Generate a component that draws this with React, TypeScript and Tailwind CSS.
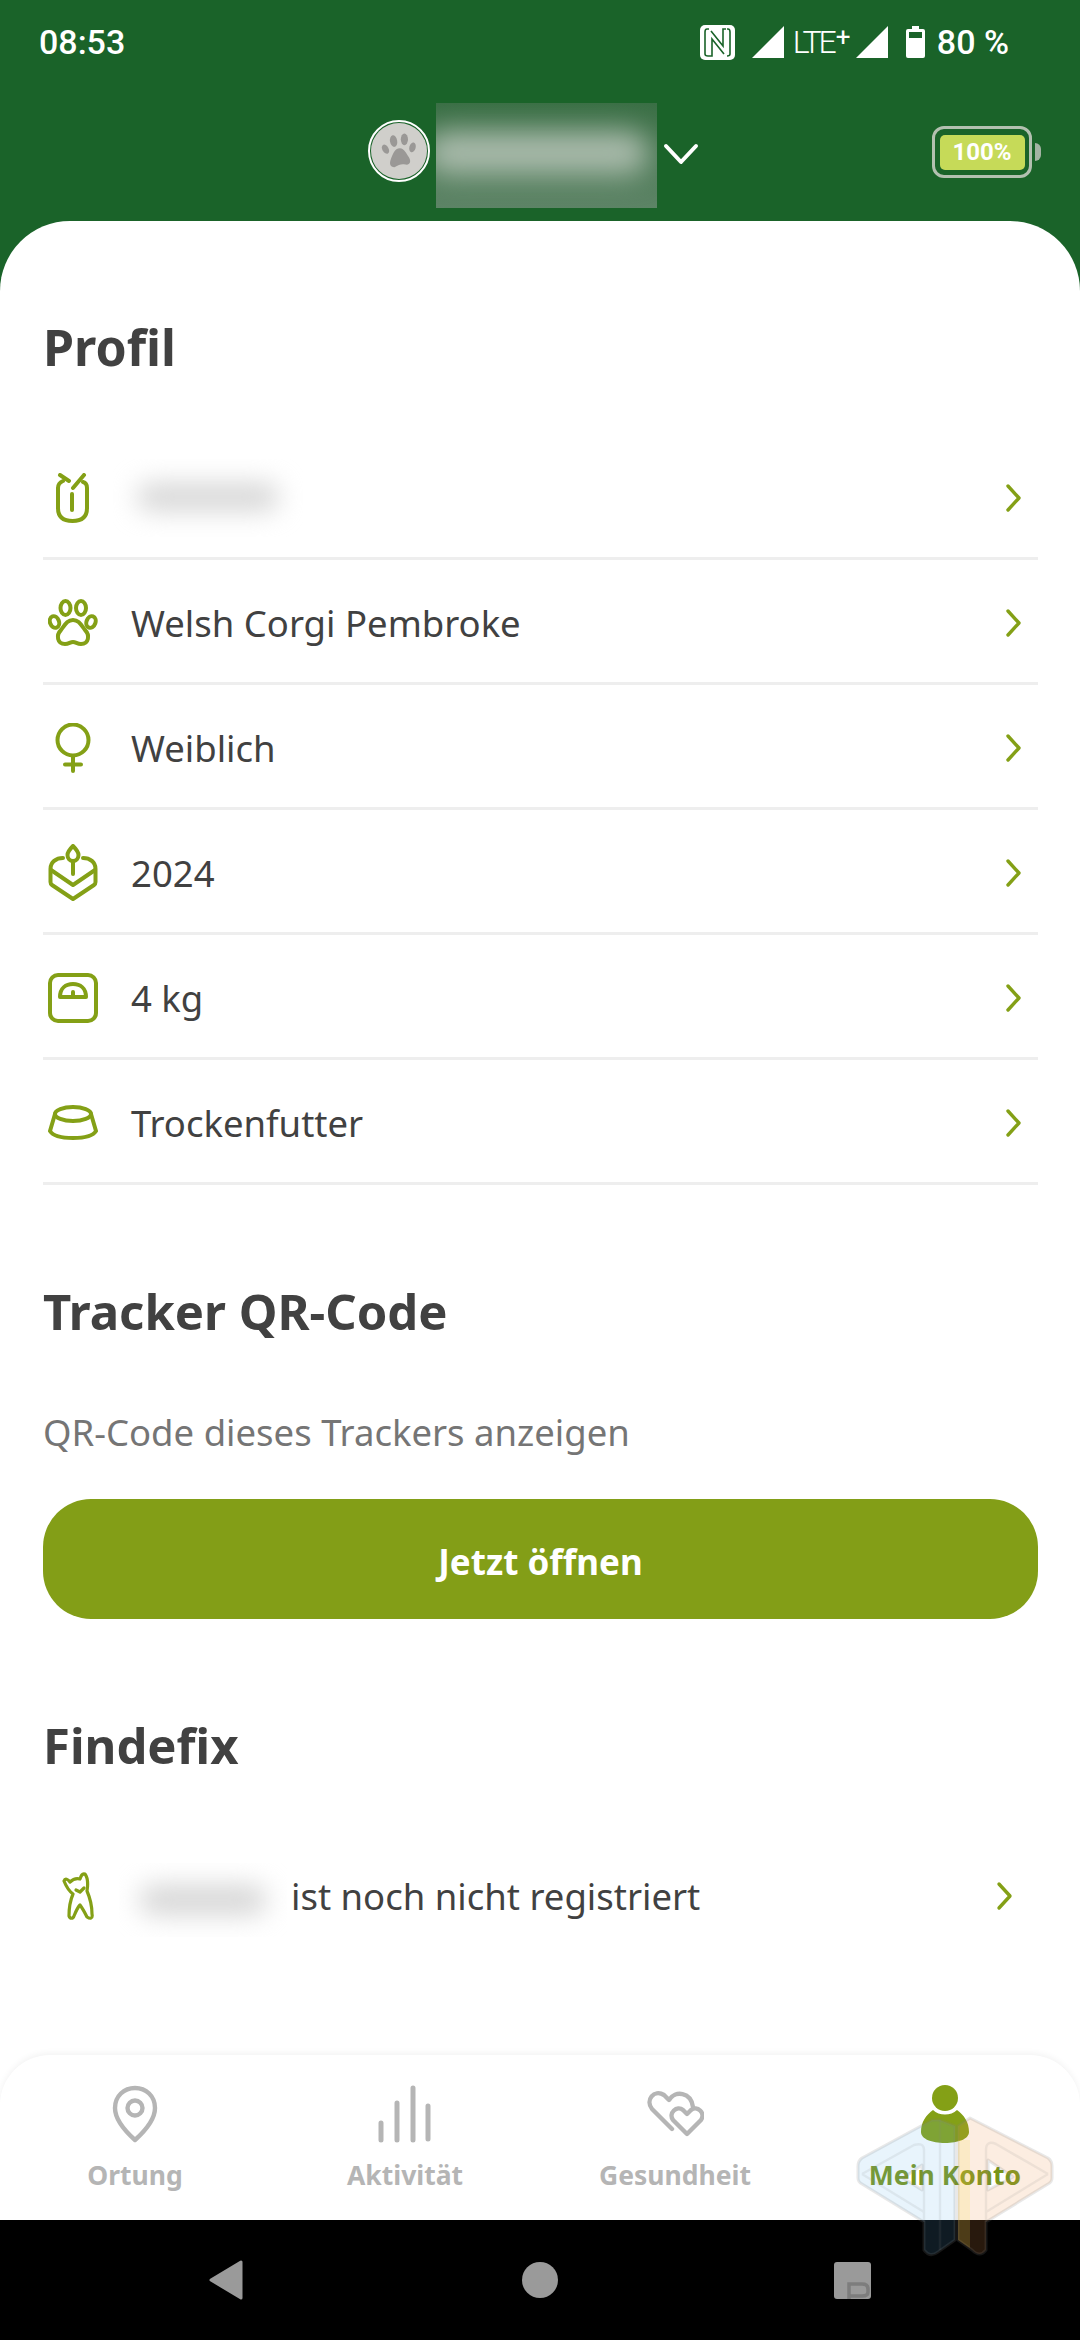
import React from 'react';

const GREEN = '#84a016';

const Chevron = ({ className = '' }: { className?: string }) => (
  <svg viewBox="0 0 20 30" className={`w-[20px] h-[30px] ${className}`} fill="none" stroke={GREEN} strokeWidth="3.4" strokeLinecap="round" strokeLinejoin="round">
    <path d="M4 3 L15 15 L4 27" />
  </svg>
);

const RowIcon = ({ children }: { children: React.ReactNode }) => (
  <svg viewBox="0 0 50 50" className="w-[50px] h-[50px] shrink-0" fill="none" stroke={GREEN} strokeWidth="4" strokeLinecap="round" strokeLinejoin="round">
    {children}
  </svg>
);

const TrackerIcon = () => (
  <RowIcon>
    <path d="M12 2 L21 8 M36 2 L25 15" />
    <path d="M15 8 Q10 10 10 15 V35 Q10 48 24.5 48 Q39 48 39 35 V15 Q39 10 35 9" />
    <path d="M24 21 V37" />
  </RowIcon>
);

const PawIcon = () => (
  <RowIcon>
    <ellipse cx="17.5" cy="10" rx="5" ry="7" />
    <ellipse cx="33" cy="10" rx="5" ry="7" />
    <ellipse cx="6.5" cy="24" rx="4.5" ry="6" transform="rotate(-20 6.5 24)" />
    <ellipse cx="43" cy="24" rx="4.5" ry="6" transform="rotate(20 43 24)" />
    <path d="M25 22 C31 22 33 27 37 32 C42 37 41 46 33 46 C29 46 28 44 25 44 C22 44 21 46 17 46 C9 46 8 37 13 32 C17 27 19 22 25 22 Z" />
  </RowIcon>
);

const FemaleIcon = () => (
  <RowIcon>
    <circle cx="25" cy="17" r="15.5" />
    <path d="M25 33 V48 M17 41.5 H33" />
  </RowIcon>
);

const CakeIcon = () => (
  <svg viewBox="0 0 50 58" className="w-[50px] h-[58px] shrink-0" fill="none" stroke={GREEN} strokeWidth="4" strokeLinecap="round" strokeLinejoin="round">
    <path d="M25 2 C22 5 19.5 8 19.5 11 C19.5 14.5 22 17 25 17 C28 17 30.5 14.5 30.5 11 C30.5 8 28 5 25 2 Z" />
    <path d="M25 17 V30" />
    <path d="M15 14 C8 14 2.5 18 2.5 25 V38 Q2.5 40 4 41 L25 55 L46 41 Q47.5 40 47.5 38 V25 C47.5 18 42 14 35 14" />
    <path d="M3 26 L25 41 L47 26" />
  </svg>
);

const ScaleIcon = () => (
  <RowIcon>
    <rect x="2" y="2" width="46" height="46" rx="8" />
    <path d="M12 24 C12 15 18 11 25 11 C32 11 38 15 38 24 Z" />
    <path d="M25 19 V22" strokeWidth="4" />
  </RowIcon>
);

const BowlIcon = () => (
  <svg viewBox="0 0 50 36" className="w-[50px] h-[36px] shrink-0" fill="none" stroke={GREEN} strokeWidth="4" strokeLinecap="round" strokeLinejoin="round">
    <ellipse cx="25" cy="9" rx="18" ry="7" />
    <path d="M7 9 L2 26 C5 31 15 33 25 33 C35 33 45 31 48 26 L43 9" />
  </svg>
);

const DogIcon = () => (
  <svg viewBox="0 0 32 48" className="w-[32px] h-[48px] shrink-0" fill="none" stroke={GREEN} strokeWidth="3.2" strokeLinecap="round" strokeLinejoin="round">
    <path d="M2 9 C4 14 7 19 11 22 C8 29 7 36 7 44 C8 47 11 47 12 44 C14 39 16 35 18 33 C21 37 23 41 25 45 C28 47 31 47 30 42 C30 34 28 26 25 19 C26 13 26 6 23 2 C20 1 19 4 18 7 C14 6 10 8 8 10 C6 7 3 6 2 9 Z" />
    <path d="M14 18 L18 20 L22 16" />
  </svg>
);

const ProfileRow = ({ icon, children }: { icon: React.ReactNode; children: React.ReactNode }) => (
  <div className="h-[125px] pt-[4px] flex items-center border-b-[3px] border-[#eeeeee]">
    <div className="w-[88px] pl-[5px] flex items-center shrink-0">{icon}</div>
    <div className="flex-1 text-[36.5px] text-[#414141]">{children}</div>
    <Chevron className="mr-[14px]" />
  </div>
);

const NavItem = ({ icon, label, active = false }: { icon: React.ReactNode; label: string; active?: boolean }) => (
  <div className="flex flex-col items-center">
    <div className="h-[60px] flex items-center justify-center">{icon}</div>
    <div className={`mt-[12px] text-[26.5px] leading-[38px] font-bold ${active ? 'text-[#78951a]' : 'text-[#b5b5b5]'}`}>{label}</div>
  </div>
);

export default function App() {
  return (
    <div className="relative w-[1080px] h-[2340px] flex flex-col overflow-hidden bg-white font-['Noto_Sans',sans-serif]">
      <div className="shrink-0 bg-[#1a6329] pb-[70px]">
        {/* Status bar */}
        <div className="h-[84px] pl-[39px] pr-[71px] pt-[20px] flex items-start justify-between text-white font-['Roboto',sans-serif]">
          <span className="text-[34px] leading-[44px] font-medium">08:53</span>
          <div className="flex items-center h-[44px]">
            <svg viewBox="0 0 35 35" className="w-[35px] h-[35px]" fill="none">
              <rect width="35" height="35" rx="5" fill="white" />
              <path d="M9 4 H7 Q5 4 5 7 V29 Q5 31 8 31 H12 V14 L24 29" stroke="#1a6329" strokeWidth="1.6" />
              <path d="M26 4 H23 V21 L11 6" stroke="#1a6329" strokeWidth="1.6" />
              <path d="M27 4 H28 Q30 4 30 7 V29 Q30 31 27 31" stroke="#1a6329" strokeWidth="1.6" />
            </svg>
            <svg viewBox="0 0 32 32" className="w-[32px] h-[32px] ml-[17px]" fill="white"><path d="M32 0 V32 H0 Z" /></svg>
            <span className="ml-[9px] w-[56px] h-[32px] flex items-start text-[32px] font-light leading-[32px] tracking-[-3px]">
              LTE<span className="text-[26px] leading-[22px] tracking-normal ml-[2px] font-normal">+</span>
            </span>
            <svg viewBox="0 0 32 32" className="w-[32px] h-[32px] ml-[7px]" fill="white"><path d="M32 0 V32 H0 Z" /></svg>
            <svg viewBox="0 0 19 32" className="w-[19px] h-[32px] ml-[18px]" fill="white">
              <path fillRule="evenodd" d="M6 0 H13 V3 H17 Q19 3 19 5 V30 Q19 32 17 32 H2 Q0 32 0 30 V5 Q0 3 2 3 H6 Z M3 6 V12 H16 V6 Z" />
            </svg>
            <span className="ml-[12px] text-[34px] font-medium leading-none">80 %</span>
          </div>
        </div>

        {/* Tracker switcher */}
        <div className="h-[137px] flex items-start">
          <div className="ml-[368px] mt-[36px] w-[62px] h-[62px] rounded-full border-[2px] border-white p-[1px]">
            <div className="w-full h-full rounded-full bg-[#d0cfcb] flex items-center justify-center">
              <svg viewBox="0 0 40 40" className="w-[36px] h-[36px]" fill="#9a9896">
                <ellipse cx="14" cy="9" rx="4" ry="6.5" transform="rotate(-10 14 9)" />
                <ellipse cx="26" cy="7" rx="4" ry="6.5" />
                <ellipse cx="5" cy="18" rx="3.5" ry="5.5" transform="rotate(-30 5 18)" />
                <ellipse cx="35" cy="16" rx="3.5" ry="5.5" transform="rotate(15 35 16)" />
                <path d="M21 17 C26 17 28 23 31 27 C34 32 32 36 27 35 C23 34 20 35 15 38 C10 38 9 34 11 29 C13 24 15 17 21 17 Z" />
              </svg>
            </div>
          </div>
          <div className="ml-[6px] mt-[19px] w-[221px] h-[105px] overflow-hidden bg-gradient-to-b from-[#3a6f45] to-[#5d8466]">
            <div className="w-[225px] -ml-[12px] mt-[28px] h-[44px] rounded-full bg-[#a9baab] blur-[14px]" />
          </div>
          <svg viewBox="0 0 36 22" className="ml-[6px] mt-[59px] w-[36px] h-[22px]" fill="none" stroke="white" strokeWidth="4" strokeLinecap="round" strokeLinejoin="round">
            <path d="M3 3 L18 19 L33 3" />
          </svg>
          <div className="ml-[233px] mt-[42px] flex items-center">
            <div className="w-[100px] h-[52px] rounded-[12px] border-[3px] border-[#b3c0b0] flex items-center justify-center">
              <div className="w-[85px] h-[35px] rounded-[5px] bg-[#c6da58] text-white text-[24px] leading-[35px] font-bold text-center font-['Roboto',sans-serif]">100%</div>
            </div>
            <div className="ml-[3px] w-[6px] h-[18px] rounded-r-full bg-[#a3b3a3]" />
          </div>
        </div>
      </div>

      {/* Page content */}
      <div className="relative -mt-[70px] flex-1 min-h-0 bg-white rounded-t-[70px] pl-[43px] pr-[42px] flex flex-col">
        <h1 className="mt-[92px] text-[50px] leading-[68px] font-bold text-[#414141]">Profil</h1>
        <div className="mt-[54px]">
          <ProfileRow icon={<TrackerIcon />}>
            <div className="w-[190px] h-[78px] -ml-[18px] overflow-hidden">
              <div className="mx-[24px] my-[24px] h-[28px] rounded-full bg-[#d6d6d6] blur-[13px]" />
            </div>
          </ProfileRow>
          <ProfileRow icon={<PawIcon />}>Welsh Corgi Pembroke</ProfileRow>
          <ProfileRow icon={<FemaleIcon />}>Weiblich</ProfileRow>
          <ProfileRow icon={<CakeIcon />}>2024</ProfileRow>
          <ProfileRow icon={<ScaleIcon />}>4 kg</ProfileRow>
          <ProfileRow icon={<BowlIcon />}>Trockenfutter</ProfileRow>
        </div>

        <h2 className="mt-[92px] text-[49px] leading-[68px] font-bold text-[#414141]">Tracker QR-Code</h2>
        <p className="mt-[62px] text-[36.5px] leading-[50px] text-[#757575]">QR-Code dieses Trackers anzeigen</p>
        <button className="mt-[42px] h-[120px] pt-[6px] rounded-[48px] bg-[#839e17] text-white text-[35px] font-bold">Jetzt öffnen</button>

        <h2 className="mt-[92px] text-[49px] leading-[68px] font-bold text-[#414141]">Findefix</h2>
        <div className="mt-[84px] flex items-center h-[74px] pb-[8px]">
          <div className="w-[76px] pl-[19px] shrink-0 flex items-center"><DogIcon /></div>
          <div className="w-[168px] h-[74px] -mb-[8px] overflow-hidden shrink-0">
            <div className="mx-[20px] my-[22px] h-[30px] rounded-full bg-[#d6d6d6] blur-[13px]" />
          </div>
          <div className="ml-[4px] flex-1 text-[36.5px] text-[#414141]">ist noch nicht registriert</div>
          <Chevron className="mr-[23px]" />
        </div>
      </div>

      {/* Bottom navigation */}
      <div className="relative h-[165px] shrink-0 bg-white rounded-t-[50px] shadow-[0_-2px_6px_rgba(0,0,0,0.05)] grid grid-cols-4 pt-[29px]">
        <NavItem
          label="Ortung"
          icon={
            <svg viewBox="0 0 46 58" className="w-[46px] h-[58px]" fill="none" stroke="#b5b5b5" strokeWidth="4.4" strokeLinejoin="round">
              <path d="M23 3 C34 3 43 11 43 23 C43 34 33 46 23 55 C13 46 3 34 3 23 C3 11 12 3 23 3 Z" />
              <circle cx="23" cy="23" r="7.5" />
            </svg>
          }
        />
        <NavItem
          label="Aktivität"
          icon={
            <svg viewBox="0 0 54 58" className="w-[54px] h-[58px]" fill="none" stroke="#b5b5b5" strokeWidth="5" strokeLinecap="round">
              <path d="M3 38 V55 M19 18 V55 M35 3 V55 M50 21 V54" />
            </svg>
          }
        />
        <NavItem
          label="Gesundheit"
          icon={
            <svg viewBox="0 0 58 46" className="w-[58px] h-[46px]" fill="none" stroke="#b5b5b5" strokeWidth="4.4" strokeLinecap="round" strokeLinejoin="round">
              <path d="M26 38 L6 18 C-1 9 8 -2 18 4 L23 9 C29 -1 45 1 47 16" />
              <path d="M41 43 L27 29 C22 22 31 14 37 19 L41 23 L45 19 C51 14 60 22 55 29 Z" />
            </svg>
          }
        />
        <NavItem
          active
          label="Mein Konto"
          icon={
            <svg viewBox="0 0 50 58" className="w-[50px] h-[58px]" fill="#84a016">
              <circle cx="25" cy="13" r="13" />
              <path d="M13 25 C19 31 31 31 37 25 C44 30 49 37 49 47 C49 54 38 58 25 58 C12 58 1 54 1 47 C1 37 6 30 13 25 Z" />
            </svg>
          }
        />
      </div>

      {/* System nav */}
      <div className="h-[120px] shrink-0 bg-black pl-[208px] flex items-center">
        <svg viewBox="0 0 36 42" className="w-[36px] h-[42px]" fill="#9a9a9a" stroke="#9a9a9a" strokeWidth="3" strokeLinejoin="round">
          <path d="M33 3 V39 L3 21 Z" />
        </svg>
        <div className="ml-[278px] w-[36px] h-[36px] rounded-full bg-[#9a9a9a]" />
        <svg viewBox="0 0 37 37" className="ml-[276px] w-[37px] h-[37px]">
          <rect width="37" height="37" rx="3" fill="#9a9a9a" />
          <path d="M15 37 V22 H28 Q34 22 34 27 V30 Q34 34 28 34 H15" fill="none" stroke="#7d7d7d" strokeWidth="3.5" />
        </svg>
      </div>

      {/* Watermark */}
      <svg viewBox="0 0 230 230" className="absolute left-[840px] top-[2090px] w-[230px] h-[230px] pointer-events-none" fill="none" strokeLinejoin="round">
        <path fillRule="evenodd" d="M92 30 L22 68 Q18 71 18 76 V88 Q18 92 22 94 L84 132 V160 Q90 168 98 162 L115 150 V36 L100 30 Z M82 75 L63 88 L82 100 Z" fill="#64b4eb" fillOpacity="0.15" stroke="#808080" strokeOpacity="0.18" strokeWidth="3" />
        <path d="M22 84 L74 55 Q84 52 84 60 V132 M22 84 L84 122 M100 30 V160" stroke="#808080" strokeOpacity="0.12" strokeWidth="2.5" />
        <path fillRule="evenodd" d="M130 28 L208 68 Q212 71 212 76 V88 Q212 92 208 94 L146 132 V160 Q140 168 132 160 L118 150 V36 Z M148 70 L173 87 L148 100 Z" fill="#f09650" fillOpacity="0.17" stroke="#808080" strokeOpacity="0.18" strokeWidth="3" />
        <path d="M208 84 L156 54 Q146 50 146 60 V132 M208 84 L146 122" stroke="#808080" strokeOpacity="0.12" strokeWidth="2.5" />
        <path d="M118 50 H130 V158 L118 150 Z" fill="#fadc50" fillOpacity="0.18" />
      </svg>
    </div>
  );
}
